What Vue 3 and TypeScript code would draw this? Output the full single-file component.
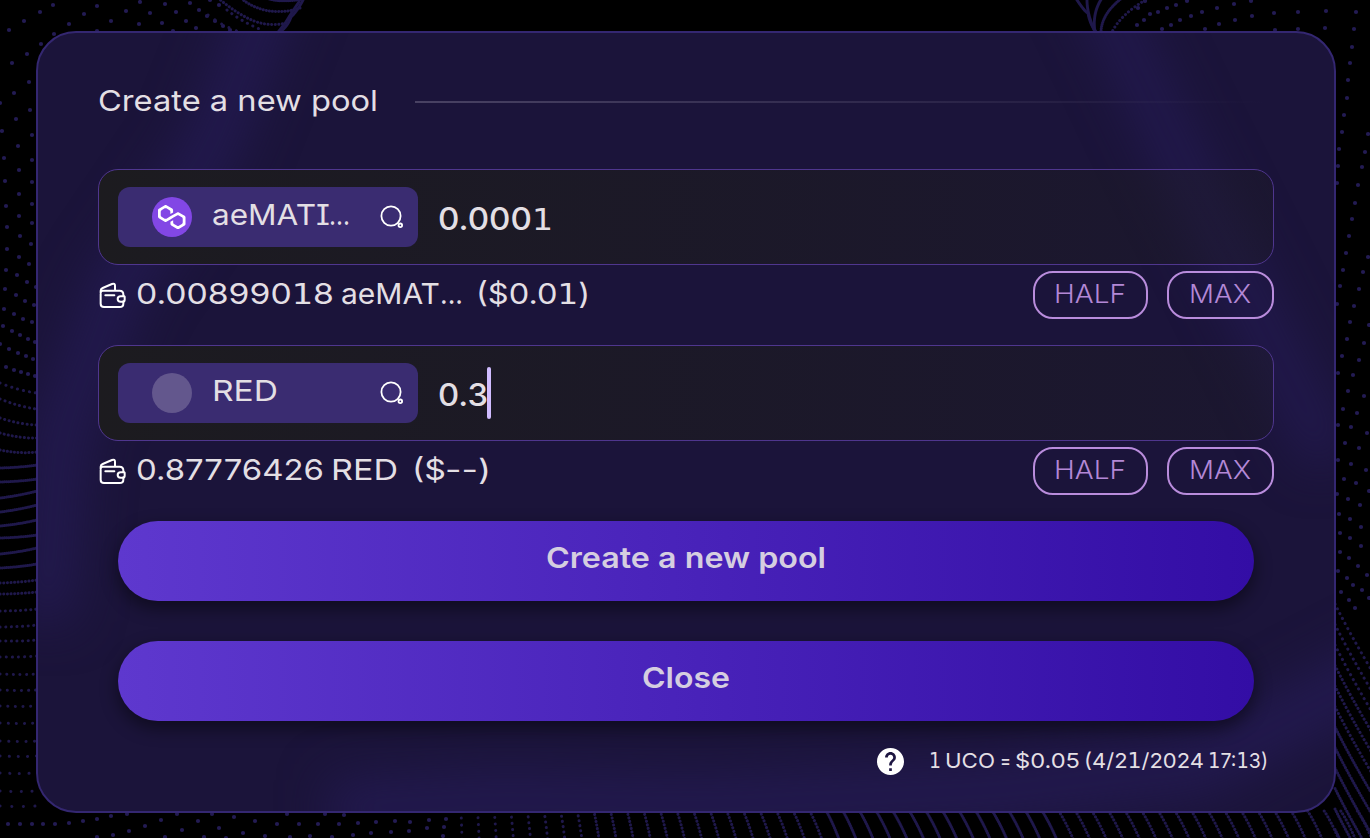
<script setup lang="ts">
type Dot = [number, number]

const topLeftDots: Dot[] = [
  [53, 5], [40, 12], [24, 21], [9, 30], [97, 6], [84, 14], [69, 24], [54, 34], [140, 2], [126, 11], [111, 21], [97, 31],
  [139, 24], [165, 4], [150, 13], [162, 23], [190, 3], [176, 12], [186, 21], [173, 31], [199, 10], [196, 28], [210, 0],
  [219, 5], [207, 16], [215, 21], [223, 26], [230, 30],
]
const leftDots: Dot[] = [
  [41, 44], [27, 54], [12, 63], [29, 82], [14, 93], [0, 103], [30, 110], [16, 119], [2, 131], [32, 135], [18, 146],
  [4, 158], [32, 160], [19, 170], [5, 181], [32, 182], [19, 194], [32, 204], [19, 216], [6, 206], [32, 223], [20, 236],
  [7, 227], [31, 244], [19, 257], [7, 249], [29, 264], [17, 275], [6, 270], [27, 282], [36, 287], [5, 289], [16, 295],
  [25, 301], [34, 305], [4, 309], [14, 314], [23, 319], [32, 322], [3, 326], [12, 331], [20, 335], [28, 339], [35, 342],
  [0, 344], [9, 349], [18, 353], [26, 356], [33, 359], [6, 367], [14, 370], [21, 372], [28, 374], [35, 376],
]
const topRightDots: Dot[] = [
  [1145, 1], [1138, 8], [1150, 14], [1158, 12], [1167, 8], [1176, 5], [1187, 1], [1144, 20], [1137, 25], [1162, 29],
  [1171, 25], [1180, 20], [1191, 16], [1202, 12], [1217, 8], [1234, 4], [1251, 1], [1205, 29], [1219, 24], [1235, 20],
  [1252, 16], [1274, 13], [1298, 12], [1275, 30], [1298, 29], [1325, 28], [1326, 11], [1356, 12], [1354, 29], [1352, 47],
  [1350, 63], [1348, 80], [1347, 98], [1344, 115], [1342, 132], [1339, 149], [1338, 166], [1337, 183], [1368, 134],
  [1365, 152], [1362, 167],
]
const rightDots: Dot[] = [
  [1358, 185], [1355, 203], [1352, 219], [1349, 236], [1346, 253], [1343, 270], [1340, 286], [1337, 304], [1368, 257],
  [1363, 272], [1359, 289], [1354, 306], [1350, 322], [1347, 339], [1342, 356], [1338, 373], [1369, 325], [1364, 343],
  [1359, 360], [1353, 375], [1348, 391], [1343, 409], [1338, 425], [1364, 396], [1357, 413], [1351, 427], [1345, 443],
  [1338, 460], [1367, 433], [1359, 448], [1351, 464], [1344, 479], [1337, 494], [1366, 470], [1356, 483], [1348, 499],
  [1339, 514], [1369, 491], [1360, 505], [1350, 519], [1340, 533], [1361, 527], [1350, 538], [1340, 552], [1361, 546],
  [1349, 558], [1338, 571], [1358, 566], [1347, 578], [1367, 575], [1353, 585], [1341, 592], [1362, 590], [1349, 600],
  [1369, 598], [1355, 608],
]
const bottomDots: Dot[] = [
  [8, 824], [20, 824], [32, 824], [43, 824], [55, 824], [69, 823], [83, 821], [97, 819], [111, 816], [127, 814],
  [113, 835], [97, 837], [129, 831], [145, 826], [161, 820], [177, 814], [165, 837], [182, 830], [198, 821], [204, 837],
  [212, 814], [219, 828], [234, 817], [226, 838], [243, 833], [255, 821], [265, 836], [277, 824], [287, 814], [290, 837],
  [299, 824], [310, 836], [318, 824], [325, 814], [332, 837], [339, 824], [344, 815], [353, 835], [358, 823], [376, 822],
  [371, 833], [395, 821], [391, 832], [410, 822], [409, 831], [429, 820], [427, 828], [446, 819], [444, 827], [443, 836],
]
const dots = [...topLeftDots, ...leftDots, ...topRightDots, ...rightDots, ...bottomDots]

interface Strand { d: string; gap: number }

const leftStrands: Strand[] = ([
  [383, 393, 6], [399, 409, 5], [418, 425, 4.5], [433, 438, 4], [450, 452, 3.5], [468, 465, 2], [482, 479, 2],
  [498, 491, 2], [512, 505, 2], [526, 520, 2], [538, 535, 2], [554, 548, 2], [568, 564, 2], [583, 580, 3.5],
  [594, 592, 3.5], [611, 609, 5], [627, 625, 5.5], [641, 640, 5.5], [657, 656, 6], [674, 674, 6.5], [690, 690, 7],
  [706, 706, 7.5], [723, 723, 8], [741, 741, 8.5], [756, 756, 9], [773, 773, 9.5], [791, 791, 10.5], [806, 806, 11.5],
] as [number, number, number][]).map(([a, b, gap]) => ({ d: `M0 ${a}Q20 ${(a + b) / 2 + (a < b ? 3 : 1)} 37 ${b}`, gap }))

const bottomStrands: Strand[] = Array.from({ length: 55 }, (_, i) => {
  const x = 461 + i * 16.6
  const lean = Math.min(15, 1 + i * 0.55)
  return { d: `M${x} 811Q${x + lean * 0.45} 821 ${x + lean} 840`, gap: i < 8 ? 7 - i * 0.3 : i < 22 ? 3.5 : i < 36 ? 2 : 3.4 }
})

const rightStrands: Strand[] = Array.from({ length: 13 }, (_, i) => {
  const y = 604 + i * 20.5
  return { d: `M1335 ${y}Q1350 ${y + 30} 1372 ${y + 67}`, gap: i < 3 ? 5.5 : i < 6 ? 4 : 2.8 }
})

const crestStrands: Strand[] = [
  { d: 'M303 0Q298 10 291 17Q287 28 278 33', gap: 1 },
  { d: 'M299 2Q292 12 286 22L279 31', gap: 1 },
  { d: 'M300 8Q282 14 264 10Q247 5 239 -4', gap: 3 },
  { d: 'M286 23Q270 27 254 21Q237 14 218 -2', gap: 3.5 },
  { d: 'M227 10Q242 22 262 30', gap: 6 },
  { d: 'M303 -1Q280 3 266 -2', gap: 2 },
  { d: 'M208 15Q224 27 240 32', gap: 8 },
  { d: 'M1077 0Q1085 12 1088 13Q1090 25 1097 33', gap: 1 },
  { d: 'M1087 0Q1087 14 1095 32', gap: 1 },
  { d: 'M1102 -2Q1092 13 1095 32', gap: 1 },
  { d: 'M1122 -2Q1101 14 1101 33', gap: 2 },
  { d: 'M1149 -2Q1120 14 1111 34', gap: 4 },
]
const strands = [...leftStrands, ...bottomStrands, ...rightStrands, ...crestStrands]

/** A word with its left edge and advance width in pixels. */
type Word = [text: string, x: number, width: number]

interface Row { id: string; polygon: boolean; symbol: Word[]; amount: Word[]; amountBox: number; focused: boolean; balance: Word[]; balanceBox: number; fiat: Word[] }

const rows: Row[] = [
  {
    id: 'matic', polygon: true, focused: false,
    symbol: [['aeMATI', -1, 118], ['...', 116, 21]],
    amount: [['0.0001', -1, 115]], amountBox: 113,
    balance: [['0.00899018', -2, 198], ['aeMAT', 203, 99], ['...', 302, 23]], balanceBox: 328,
    fiat: [['($0.01)', -3, 114]],
  },
  {
    id: 'red', polygon: false, focused: true,
    symbol: [['RED', -1, 66]],
    amount: [['0.3', -1, 50]], amountBox: 48,
    balance: [['0.87776426', -2, 188], ['RED', 193, 67]], balanceBox: 263,
    fiat: [['($', -2, 34], ['--', 31, 33], [')', 64, 13]],
  },
]
const actions = [
  { label: 'Create a new pool', width: 281 },
  { label: 'Close', width: 89 },
]
const rate: Word[] = [['1', -1, 12], ['UCO', 15, 50], ['=', 70, 11], ['$0.05', 85, 65], ['(4/21/2024', 154, 120], ['17:13)', 278, 60]]

const pieces = (text: string): string[] => text.split(/(1)/).filter(Boolean)
</script>

<template>
  <main class="screen">
    <svg class="backdrop" viewBox="0 0 1370 838" aria-hidden="true">
      <circle v-for="([x, y], i) in dots" :key="i" :cx="x" :cy="y" r="2.1" />
      <path v-for="(s, i) in strands" :key="'s' + i" :d="s.d" :stroke-dasharray="`0.1 ${s.gap}`" />
    </svg>

    <section class="panel">
      <svg class="glow" viewBox="38 33 1296 778" aria-hidden="true">
        <defs>
          <filter id="soft" filterUnits="userSpaceOnUse" x="-100" y="-100" width="1600" height="1050" color-interpolation-filters="sRGB"><feGaussianBlur stdDeviation="24" /></filter>
        </defs>
        <g filter="url(#soft)">
          <path d="M285 -40L210 150L115 290L60 440L45 620" stroke-width="54" />
          <path d="M1085 -40L1175 150L1250 300L1330 460" stroke-width="44" />
          <path d="M330 810L500 800L700 805L1000 790L1200 765L1400 660" stroke-width="60" />
        </g>
      </svg>

      <header class="heading">
        <svg class="txt" width="283" height="38"><text x="0" y="28" font-size="29" textLength="280" lengthAdjust="spacingAndGlyphs">Create a new pool</text></svg>
        <i class="rule"></i>
      </header>

      <div v-for="row in rows" :key="row.id" class="token">
        <div class="field">
          <button class="picker">
            <span class="coin" :class="{ polygon: row.polygon }">
              <svg v-if="row.polygon" width="27.6" height="24.2" viewBox="0 0 38.4 33.5"><path fill="#fff" d="M29,10.2c-0.7-0.4-1.6-0.4-2.4,0L21,13.5l-3.8,2.1l-5.5,3.3c-0.7,0.4-1.6,0.4-2.4,0L5,16.3c-0.7-0.4-1.2-1.2-1.2-2.1v-5c0-0.8,0.4-1.6,1.2-2.1l4.3-2.5c0.7-0.4,1.6-0.4,2.4,0L16,7.2c0.7,0.4,1.2,1.2,1.2,2.1v3.3l3.8-2.2V7c0-0.8-0.4-1.6-1.2-2.1l-8-4.7c-0.7-0.4-1.6-0.4-2.4,0L1.2,5C0.4,5.4,0,6.2,0,7v9.4c0,0.8,0.4,1.6,1.2,2.1l8.1,4.7c0.7,0.4,1.6,0.4,2.4,0l5.5-3.2l3.8-2.2l5.5-3.2c0.7-0.4,1.6-0.4,2.4,0l4.3,2.5c0.7,0.4,1.2,1.2,1.2,2.1v5c0,0.8-0.4,1.6-1.2,2.1L29,28.8c-0.7,0.4-1.6,0.4-2.4,0l-4.3-2.5c-0.7-0.4-1.2-1.2-1.2-2.1V21l-3.8,2.2v3.3c0,0.8,0.4,1.6,1.2,2.1l8.1,4.7c0.7,0.4,1.6,0.4,2.4,0l8.1-4.7c0.7-0.4,1.2-1.2,1.2-2.1V17c0-0.8-0.4-1.6-1.2-2.1L29,10.2z" /></svg>
            </span>
            <svg class="txt symbol" width="150" height="38"><text v-for="w in row.symbol" :key="w[0]" :x="w[1]" y="27" font-size="29" :textLength="w[2]" lengthAdjust="spacingAndGlyphs">{{ w[0] }}</text></svg>
            <svg class="search" width="26" height="26" viewBox="0 0 26 26">
              <circle cx="12" cy="12" r="9.6" />
              <circle cx="21.3" cy="21.3" r="1.8" />
            </svg>
          </button>
          <svg class="txt amount" :width="row.amountBox" height="40"><text v-for="w in row.amount" :key="w[0]" :x="w[1]" y="30" font-size="31" font-weight="500" :textLength="w[2]" lengthAdjust="spacingAndGlyphs"><tspan v-for="(p, i) in pieces(w[0])" :key="i" :class="{ one: p === '1' }">{{ p }}</tspan></text></svg>
          <i v-if="row.focused" class="caret"></i>
        </div>

        <div class="meta">
          <svg class="wallet" width="27" height="28" viewBox="0 0 81 84">
            <path d="M5 38V68Q5 78 15 78H62Q73 78 73 68V61M73 45V40Q73 29 62 29H12Q5 29 5 36V29Q5 24 11 21L39 9Q48 6 48 14V28M19 43H46" />
            <path d="M76 46H65Q56 46 56 54Q56 62 65 62H72Q77 62 77 56V47" />
          </svg>
          <svg class="txt balance" :width="row.balanceBox" height="38"><text v-for="w in row.balance" :key="w[0]" :x="w[1]" y="28" font-size="29" :textLength="w[2]" lengthAdjust="spacingAndGlyphs"><tspan v-for="(p, i) in pieces(w[0])" :key="i" :class="{ one: p === '1' }">{{ p }}</tspan></text></svg>
          <svg class="txt fiat" width="120" height="38"><text v-for="w in row.fiat" :key="w[0]" :x="w[1]" y="28" font-size="29" :textLength="w[2]" lengthAdjust="spacingAndGlyphs"><tspan v-for="(p, i) in pieces(w[0])" :key="i" :class="{ one: p === '1' }">{{ p }}</tspan></text></svg>
          <button class="chip half"><svg class="txt" width="69" height="32"><text x="-2" y="24" font-size="26" font-weight="350" textLength="72" lengthAdjust="spacingAndGlyphs">HALF</text></svg></button>
          <button class="chip max"><svg class="txt" width="61" height="32"><text x="-1" y="24" font-size="26" font-weight="350" textLength="62" lengthAdjust="spacingAndGlyphs">MAX</text></svg></button>
        </div>
      </div>

      <div class="actions">
        <button v-for="a in actions" :key="a.label" class="action">
          <svg class="txt" :width="a.width" height="40"><text x="0" y="30" font-size="29" font-weight="600" :textLength="a.width - 1" lengthAdjust="spacingAndGlyphs">{{ a.label }}</text></svg>
        </button>
      </div>

      <footer class="rate">
        <svg class="help" width="27" height="27" viewBox="2 2 20 20"><path fill="#fff" d="M12 2C6.480 2 2 6.480 2 12s4.480 10 10 10 10-4.480 10-10S17.520 2 12 2zm1 17h-2v-2h2v2zm2.070-7.750l-.9.920C13.450 12.900 13 13.500 13 15h-2v-.5c0-1.100.450-2.100 1.170-2.830l1.240-1.260c.370-.360.590-.860.590-1.410 0-1.100-.9-2-2-2s-2 .9-2 2H8c0-2.210 1.790-4 4-4s4 1.790 4 4c0 .880-.360 1.680-.930 2.250z" /></svg>
        <svg class="txt" width="338" height="28"><text v-for="w in rate" :key="w[0]" :x="w[1]" y="21" font-size="20.500" :textLength="w[2]" lengthAdjust="spacingAndGlyphs"><tspan v-for="(p, i) in pieces(w[0])" :key="i" :class="{ one: p === '1' }">{{ p }}</tspan></text></svg>
      </footer>
    </section>
  </main>
</template>

<style>
body { margin: 0; background: #000; overflow: hidden; }
</style>

<style scoped>
.screen { position: relative; box-sizing: border-box; width: 1370px; height: 838px; padding: 31px 34px 25px 36px; background: #000; overflow: hidden; font-family: Inter, "Liberation Sans", sans-serif; }
.backdrop { position: absolute; inset: 0; width: 1370px; height: 838px; }
.backdrop circle { fill: #231b53; }
.backdrop path { fill: none; stroke: #1f184b; stroke-width: 3; stroke-linecap: round; }
.panel { position: relative; box-sizing: border-box; width: 1300px; height: 782px; padding: 46px 60px 0; border: 2px solid #342771; border-radius: 40px; background: #1b143a; overflow: hidden; }
.glow { position: absolute; inset: 0; width: 1296px; height: 778px; }
.glow path { fill: none; stroke: #22194e; stroke-linejoin: round; }
.heading, .token, .actions, .rate { position: relative; }
button { margin: 0; padding: 0; border: 0; background: none; font: inherit; }
.txt { display: block; flex: none; overflow: visible; fill: #e3dfe4; font-family: Inter, "Liberation Sans", sans-serif; font-feature-settings: "cv08"; }
.one { font-family: "DejaVu Sans", sans-serif; font-weight: 400; }
.heading { display: flex; height: 90px; padding-top: 4px; box-sizing: border-box; }
.rule { width: 850px; height: 2px; margin: 18px 0 0 34px; background: linear-gradient(90deg, #494263, rgba(73, 66, 99, 0)); }
.token { height: 176px; }
.field { display: flex; align-items: flex-start; box-sizing: border-box; width: 1176px; height: 96px; padding: 17px 19px; border: 1px solid #4f368e; border-radius: 20px; background: linear-gradient(90deg, #1c1b1f, rgba(28, 27, 31, 0.35)); }
.picker { display: flex; align-items: center; box-sizing: border-box; width: 300px; height: 60px; padding: 0 12px 0 34px; border-radius: 12px; background: #3a2c71; }
.coin { display: flex; flex: none; align-items: center; justify-content: center; width: 40px; height: 40px; border-radius: 50%; background: #63578d; }
.coin.polygon { background: #8247e5; }
.symbol { margin: 0 16px 0 21px; }
.search { flex: none; fill: none; stroke: #fff; stroke-width: 1.8; }
.amount { margin: 13px 0 0 21px; }
.caret { width: 4px; height: 52px; margin: 4px 0 0; border-radius: 2px; background: #d0bcff; }
.meta { display: flex; width: 1176px; height: 60px; }
.wallet { flex: none; margin: 16px 0 0 1px; fill: none; stroke: #fff; stroke-width: 6; stroke-linecap: round; stroke-linejoin: round; }
.balance { margin: 11px 0 0 12px; }
.fiat { margin: 11px 0 0 13px; }
.chip { display: flex; justify-content: center; box-sizing: border-box; height: 48px; margin-top: 6px; padding-top: 6px; border: 2px solid #b98cdc; border-radius: 20px; }
.chip .txt { fill: #b388d6; }
.half { width: 115px; margin-left: auto; }
.max { width: 107px; margin-left: 19.500px; }
.actions { display: grid; gap: 40px; width: 1136px; margin-left: 20px; }
.action { display: flex; justify-content: center; height: 80px; padding-top: 17px; border-radius: 40px; background: linear-gradient(90deg, #5e38ce, #330da5); box-shadow: 0 7px 18px rgba(0, 0, 0, 0.48); }
.action .txt { fill: #d5cee0; }
.rate { display: flex; align-items: flex-start; justify-content: flex-end; box-sizing: border-box; width: 1176px; padding: 26px 6px 0 0; }
.help { margin-top: 0.500px; margin-right: 26px; }
</style>
